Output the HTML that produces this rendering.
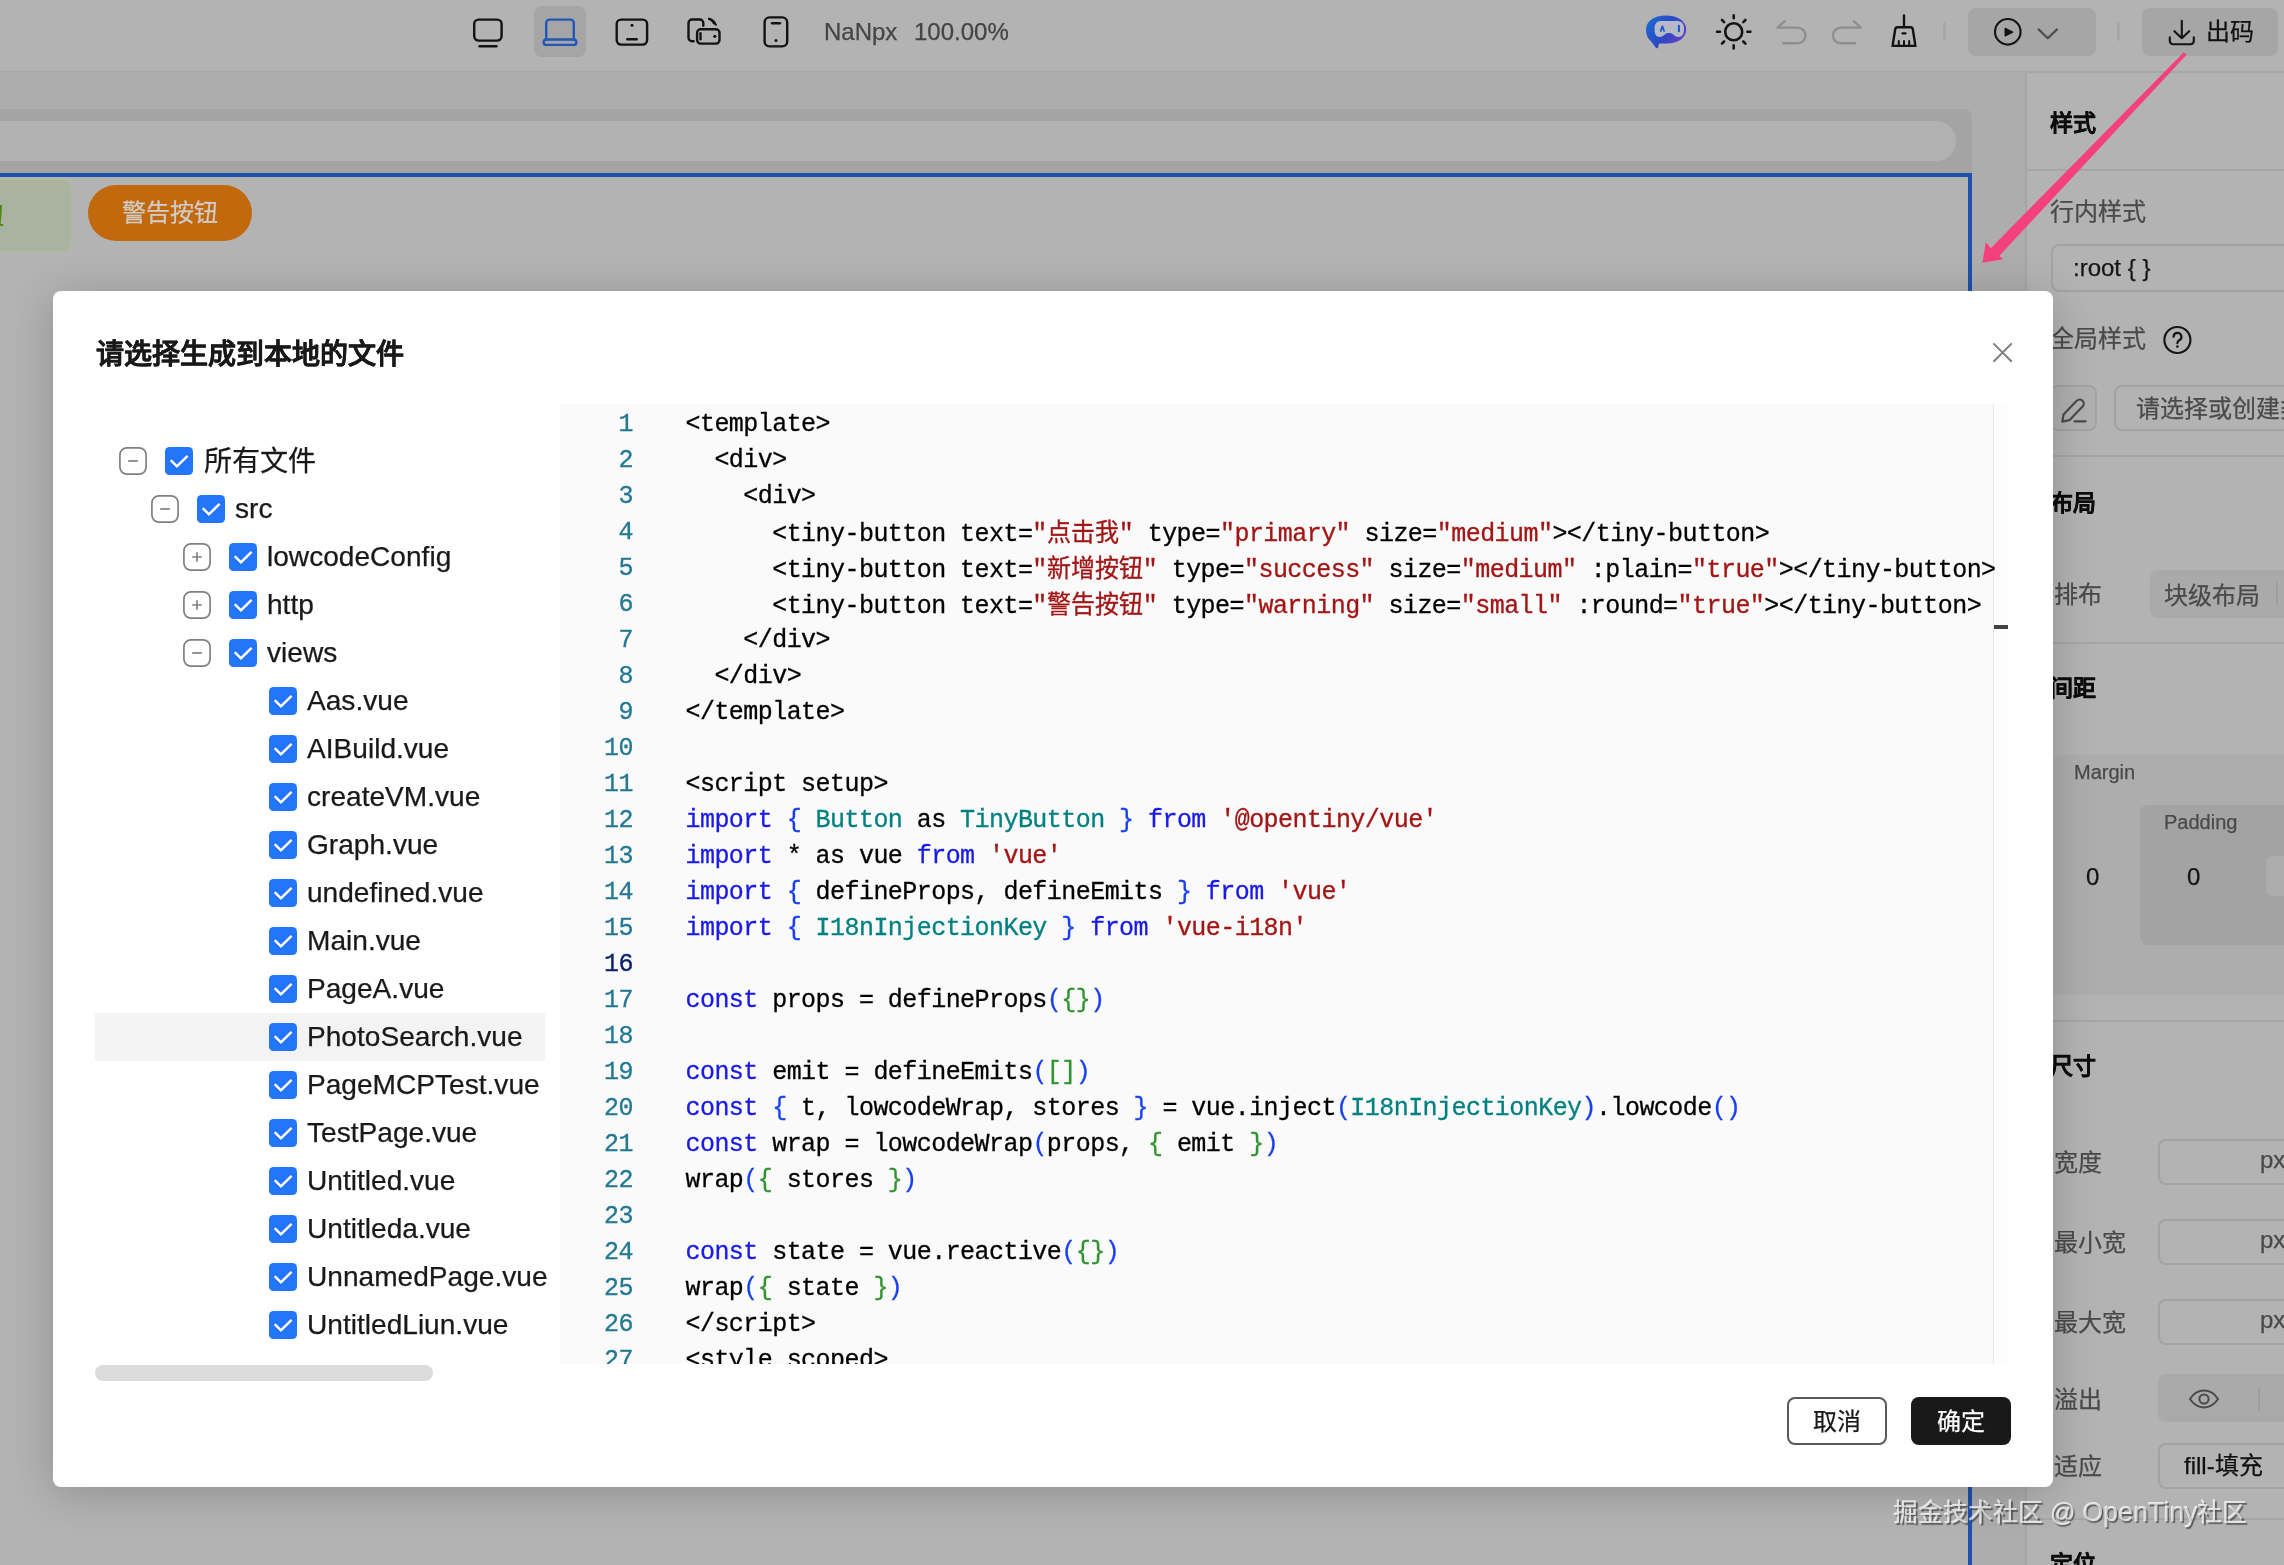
<!DOCTYPE html>
<html lang="zh-CN">
<head>
<meta charset="utf-8">
<title>出码 - 请选择生成到本地的文件</title>
<style>
*{box-sizing:border-box;margin:0;padding:0}
html,body{width:2284px;height:1565px;overflow:hidden}
body{position:relative;background:#adadad;font-family:"Liberation Sans",sans-serif;color:#111;font-size:24px;line-height:1}
#root{position:absolute;left:0;top:0;width:2284px;height:1565px;will-change:transform;-webkit-text-stroke:0.250px}
.abs{position:absolute}
svg{position:absolute;overflow:visible}
/* ---------- underlying (dimmed) app ---------- */
#toolbar{position:absolute;left:0;top:0;width:2284px;height:73px;background:#b3b3b3;border-bottom:2px solid #a7a7a7}
#canvas{position:absolute;left:0;top:72px;width:2026px;height:1493px;background:#adadad}
#frameband{position:absolute;left:0;top:109px;width:1972px;height:66px;background:#a4a4a4;border-top-right-radius:8px}
#pill{position:absolute;left:-40px;top:121px;width:1996px;height:40px;border-radius:20px;background:#b1b1b1}
#page{position:absolute;left:-4px;top:173px;width:1976px;height:1400px;background:#b3b3b3;border:4px solid #1d51ab}
#gbtn{position:absolute;left:-60px;top:178px;width:132px;height:75px;border-radius:10px;background:#a9b3a0;border:2px solid #afb9a2;color:#4c8a12;font-size:24px;line-height:71px;white-space:nowrap;overflow:visible;direction:rtl;padding-right:66px;text-align:right}
#obtn{position:absolute;left:88px;top:185px;width:164px;height:56px;border-radius:28px;background:#c2680d;color:#d0cdc9;font-size:24px;line-height:56px;text-align:center;letter-spacing:0}
#rpanel{position:absolute;left:2025px;top:73px;width:259px;height:1492px;background:#b3b3b3;border-left:2px solid #a5a5a5}
.tbtxt{position:absolute;top:19px;font-size:24px;line-height:26px;color:#454545;white-space:nowrap}
.rp{position:absolute;white-space:nowrap;font-size:24px;line-height:28px}
.rp.b{font-weight:bold;color:#0d0d0d;font-size:23px;margin-top:1px}
.rp.g{color:#4a4a4a;margin-top:1px}
.rdiv{position:absolute;left:2027px;width:257px;height:2px;background:#a6a6a6}
.rin{position:absolute;height:46px;border:2px solid #a3a3a3;border-radius:8px;background:#b3b3b3}
.rseg{position:absolute;height:48px;border-radius:8px;background:#aaaaaa}
/* ---------- modal ---------- */
#modal{position:absolute;left:53px;top:291px;width:2000px;height:1196px;background:#fff;border-radius:8px;box-shadow:0 6px 44px rgba(0,0,0,.2)}
#title{position:absolute;left:96px;top:339px;font-size:28px;line-height:32px;font-weight:bold;color:#191919;white-space:nowrap}
#tree{position:absolute;left:95px;top:437px;width:452px;height:924px;overflow:hidden}
#tree svg{position:absolute}
.tl{position:absolute;font-size:28.100px;line-height:48px;height:48px;margin-top:0px;color:#191919;white-space:nowrap}
.hl{position:absolute;left:0;width:450px;height:48px;background:#f3f3f3}
#editor{position:absolute;left:560px;top:404px;width:1448px;height:960px;background:#fafafa;overflow:hidden;font-family:"Liberation Mono",monospace;font-size:25px;letter-spacing:-0.55px;line-height:36px}
#ruler{position:absolute;left:1433px;top:0;width:15px;height:960px;background:#fcfcfc;border-left:1px solid #e6e6e6}
#cursormark{position:absolute;left:1434px;top:221px;width:14px;height:4px;background:#424242}
.ln{position:absolute;left:0;width:73px;height:36px;text-align:right;color:#237893;white-space:pre;-webkit-text-stroke:0.300px;margin-top:3px;transform:scaleY(1.035);transform-origin:0 24px}
.ln.cur{color:#0b216f}
.cl{position:absolute;left:125.500px;height:36px;color:#000;white-space:pre;-webkit-text-stroke:0.300px;margin-top:3px;transform:scaleY(1.035);transform-origin:0 24px}
.k{color:#1a1ae6}.s{color:#a31515}.t{color:#008080}.b1{color:#1840f0}.b2{color:#319331}
.cj{display:inline-block;white-space:nowrap;font-size:24px;letter-spacing:0;font-family:"Liberation Sans",sans-serif}
.btn{position:absolute;top:1397px;width:100px;height:48px;border-radius:8px;font-size:24px;line-height:46px;text-align:center;white-space:nowrap}
#wm{position:absolute;left:1893px;top:1494px;font-size:24.600px;line-height:36px;color:rgba(255,255,255,.66);text-shadow:1.500px 1.500px 1px rgba(0,0,0,.5);white-space:nowrap}
</style>
</head>
<body>
<div id="root">
<!--APP-->
<div id="toolbar"></div>
<div id="canvas"></div>
<div id="frameband"></div>
<div id="pill"></div>
<div id="page"></div>
<div id="gbtn">新增按钮</div>
<div id="obtn">警告按钮</div>
<div id="rpanel"></div>

<!-- toolbar: device icons -->
<div class="abs" style="left:534px;top:6px;width:52px;height:51px;border-radius:8px;background:#a5a5a5"></div>
<svg style="left:0;top:0" width="2284" height="72" viewBox="0 0 2284 72" fill="none" stroke="#131313" stroke-width="2.4" stroke-linecap="round" stroke-linejoin="round">
  <!-- monitor -->
  <rect x="474.2" y="19.6" width="27.4" height="21" rx="4.5"/>
  <path d="M479.5 46.2H496.5"/>
  <!-- laptop (active) -->
  <g stroke="#1f58b8">
    <path d="M546.2 39.5V23a3.4 3.4 0 0 1 3.4-3.4h20.8a3.4 3.4 0 0 1 3.4 3.4v16.5"/>
    <rect x="543.7" y="39.5" width="32.6" height="5.4" rx="2.7"/>
  </g>
  <!-- tablet -->
  <rect x="616.7" y="19.6" width="30.4" height="25" rx="4.5"/>
  <circle cx="632" cy="25.2" r="1.5" fill="#131313" stroke="none"/>
  <path d="M627.3 39.3H636.7"/>
  <!-- rotate -->
  <path d="M693.6 41.2H692a3.5 3.5 0 0 1-3.5-3.5V23a3.5 3.5 0 0 1 3.5-3.5h7.8a3.5 3.5 0 0 1 3.5 3.5V25.8"/>
  <rect x="697.1" y="29.2" width="22.4" height="14.4" rx="3.6"/>
  <path d="M700.5 33.2V39.2"/>
  <circle cx="714.8" cy="36.3" r="1.6" fill="#131313" stroke="none"/>
  <path d="M708.8 18.2c3.6 0.9 6.2 3.2 7.6 6.9l-2.9-1.6c-1-2.2-2.6-3.6-5-4.4z" fill="#131313" stroke-width="1.2"/>
  <!-- phone -->
  <rect x="764.6" y="17.4" width="22.6" height="29" rx="5"/>
  <path d="M772 23.2H780"/>
  <circle cx="776" cy="40.6" r="1.5" fill="#131313" stroke="none"/>
</svg>
<div class="tbtxt" style="left:824px">NaNpx</div>
<div class="tbtxt" style="left:914px">100.00%</div>
<!-- toolbar: right icons -->
<svg style="left:0;top:0" width="2284" height="72" viewBox="0 0 2284 72" fill="none" stroke-linecap="round" stroke-linejoin="round">
  <defs>
    <linearGradient id="rb" x1="0" y1="0.2" x2="1" y2="0.7">
      <stop offset="0" stop-color="#1c68d2"/><stop offset="0.5" stop-color="#2b49c6"/><stop offset="1" stop-color="#6a3fc0"/>
    </linearGradient>
  </defs>
  <!-- robot chat -->
  <path d="M1666 15.6c11.6 0 20.200 5.600 20.200 13.800 0 8.400-8.200 14-19.400 14h-7.800l-.8 3.800c-.3 1.300-1.500 1.500-2.300.5l-4.700-6.200c-3.400-2.700-5.200-6.800-5.200-11.600 0-8.600 7.800-14.300 20-14.300z" fill="url(#rb)"/>
  <path d="M1660.600 21h17c3.800 0 6.400 2.800 6.400 6.800v2.800c0 3.800-2.400 6.400-5.600 6.400-2.400 0-3.400-1.400-5.200-2.600-1.400-.9-2.600-1.300-4.200-1.300s-2.800.4-4.200 1.300c-1.800 1.200-2.800 2.600-5.200 2.600-3 0-5-2.600-5-6.400v-2.800c0-4 2.400-6.800 6-6.800z" fill="#b6b9c8"/>
  <path d="M1660.700 31l1.700-4.800 1.700 4.800" stroke="#2050cf" stroke-width="1.7"/>
  <path d="M1678.900 25.800v5.400" stroke="#2050cf" stroke-width="2"/>
  <!-- sun -->
  <g stroke="#131313" stroke-width="2.6">
    <circle cx="1733.7" cy="31.8" r="8.5"/>
    <path d="M1733.7 15.200v3M1733.7 45.400v3M1717 31.800h3M1747.400 31.800h3M1722 20l2.100 2.100M1743.300 41.500l2.100 2.100M1722 43.600l2.100-2.100M1743.300 22.100l2.100-2.100"/>
  </g>
  <!-- undo / redo -->
  <g stroke="#8f8f8f" stroke-width="2.4" stroke-linecap="butt">
    <path d="M1785.200 20.600l-7.600 7h20a7.850 7.850 0 0 1 0 15.700h-15.200"/>
    <path d="M1853.200 20.600l7.600 7h-20a7.850 7.850 0 0 0 0 15.700h15.200"/>
  </g>
  <!-- broom -->
  <g stroke="#131313" stroke-width="2.4">
    <path d="M1904 15.400V26.600"/>
    <path d="M1897.600 27.200h12.800a2.400 2.400 0 0 1 2.400 2.100l2.600 16.600h-22.800l2.600-16.600a2.400 2.400 0 0 1 2.400-2.100z"/>
    <path d="M1902.400 33.300h3.200" stroke-width="2.2"/>
    <path d="M1898.800 45.600v-4.600M1904 45.600v-4.600M1909.200 45.600v-4.600" stroke-width="2"/>
  </g>
  <path d="M1944.400 23v17M2118.400 23v17" stroke="#a3a3a3" stroke-width="2"/>
</svg>
<div class="abs" style="left:1968px;top:8px;width:128px;height:48px;border-radius:8px;background:#a6a6a6"></div>
<div class="abs" style="left:2142px;top:8px;width:136px;height:48px;border-radius:8px;background:#a6a6a6"></div>
<svg style="left:0;top:0" width="2284" height="72" viewBox="0 0 2284 72" fill="none" stroke="#131313" stroke-width="2.400" stroke-linecap="round" stroke-linejoin="round">
  <circle cx="2007.800" cy="31.800" r="12.800" stroke-width="2.100"/>
  <path d="M2005.200 28.400l7.400 3.700-7.400 3.700z" fill="#131313" stroke-width="1.400"/>
  <path d="M2038.600 29.400l9.200 8.800 9.200-8.800" stroke="#4d4d4d" stroke-width="2.200"/>
  <!-- download -->
  <path d="M2181.800 20.800v17M2174.400 31.200l7.400 7 7.400-7" stroke-width="2.100"/>
  <path d="M2169.800 37.400v3.600a3.200 3.200 0 0 0 3.200 3.200h17.600a3.200 3.200 0 0 0 3.200-3.200v-3.600" stroke-width="2.100"/>
</svg>
<div class="abs" style="left:2206px;top:17px;font-size:24px;line-height:30px;color:#111;white-space:nowrap">出码</div>
<!-- right panel content -->
<div class="rp b" style="left:2050px;top:108px">样式</div>
<div class="rdiv" style="top:169px"></div>
<div class="rp g" style="left:2050px;top:197px">行内样式</div>
<div class="rin" style="left:2051px;top:244px;width:260px;height:48px"></div>
<div class="rp" style="left:2073px;top:254px;color:#161616">:root { }</div>
<div class="rp g" style="left:2050px;top:324px">全局样式</div>
<svg style="left:2160px;top:322px" width="36" height="36" viewBox="0 0 36 36" fill="none" stroke="#161616" stroke-width="2.2" stroke-linecap="round" stroke-linejoin="round">
  <circle cx="17.4" cy="18" r="13"/>
  <path d="M13.6 14.800a3.900 3.900 0 1 1 5.600 3.500c-1.200.7-1.800 1.400-1.800 2.900"/>
  <circle cx="17.400" cy="24.600" r="1.300" fill="#161616" stroke="none"/>
</svg>
<div class="rin" style="left:2050px;top:385px;width:47px;height:46px;background:#b0b0b0"></div>
<svg style="left:2058px;top:392px" width="34" height="34" viewBox="0 0 34 34" fill="none" stroke="#4a4a4a" stroke-width="2.2" stroke-linecap="round" stroke-linejoin="round">
  <path d="M5.500 22.500l13.200-13.700a4.100 4.100 0 0 1 5.900 5.700L11.400 28.200l-7 1.500z"/>
  <path d="M16.500 29.400h11"/>
</svg>
<div class="rin" style="left:2114px;top:385px;width:200px;height:46px"></div>
<div class="rp g" style="left:2136px;top:394px">请选择或创建类名</div>
<div class="rdiv" style="top:455px"></div>
<div class="rp b" style="left:2050px;top:488px">布局</div>
<div class="rp g" style="left:2054px;top:580px">排布</div>
<div class="rseg" style="left:2150px;top:570px;width:160px"></div>
<div class="rp g" style="left:2164px;top:581px">块级布局</div>
<div class="abs" style="left:2276px;top:582px;width:2px;height:24px;background:#9f9f9f"></div>
<div class="rdiv" style="top:642px"></div>
<div class="rp b" style="left:2050px;top:673px">间距</div>
<div class="abs" style="left:2053px;top:755px;width:240px;height:240px;background:#adadad;border-top-left-radius:8px"></div>
<div class="rp g" style="left:2074px;top:757px;font-size:20px">Margin</div>
<div class="abs" style="left:2140px;top:805px;width:160px;height:140px;background:#a3a3a3;border-top-left-radius:8px;border-bottom-left-radius:8px"></div>
<div class="rp g" style="left:2164px;top:807px;font-size:20px">Padding</div>
<div class="rp" style="left:2086px;top:863px;color:#161616">0</div>
<div class="rp" style="left:2187px;top:863px;color:#161616">0</div>
<div class="abs" style="left:2266px;top:856px;width:40px;height:40px;background:#adadad;border-top-left-radius:6px;border-bottom-left-radius:6px"></div>
<div class="rdiv" style="top:1020px"></div>
<div class="rp b" style="left:2050px;top:1051px">尺寸</div>
<div class="rp g" style="left:2054px;top:1148px">宽度</div>
<div class="rin" style="left:2158px;top:1139px;width:160px"></div>
<div class="rp g" style="left:2260px;top:1145px">px</div>
<div class="rp g" style="left:2054px;top:1228px">最小宽</div>
<div class="rin" style="left:2158px;top:1219px;width:160px"></div>
<div class="rp g" style="left:2260px;top:1225px">px</div>
<div class="rp g" style="left:2054px;top:1308px">最大宽</div>
<div class="rin" style="left:2158px;top:1299px;width:160px"></div>
<div class="rp g" style="left:2260px;top:1305px">px</div>
<div class="rp g" style="left:2054px;top:1385px">溢出</div>
<div class="rseg" style="left:2158px;top:1374px;width:160px"></div>
<svg style="left:2186px;top:1384px" width="36" height="30" viewBox="0 0 36 30" fill="none" stroke="#4a4a4a" stroke-width="2" stroke-linecap="round" stroke-linejoin="round">
  <path d="M4 15c3.600-5.600 8.400-8.400 14-8.400s10.400 2.800 14 8.400c-3.600 5.600-8.400 8.400-14 8.400s-10.400-2.800-14-8.400z"/>
  <circle cx="18" cy="15" r="4.600"/>
</svg>
<div class="abs" style="left:2258px;top:1387px;width:2px;height:24px;background:#9f9f9f"></div>
<div class="rp g" style="left:2054px;top:1452px">适应</div>
<div class="rin" style="left:2158px;top:1443px;width:160px"></div>
<div class="rp" style="left:2184px;top:1452px;color:#111">fill-填充</div>
<div class="rdiv" style="top:1518px"></div>
<div class="rp b" style="left:2050px;top:1549px">定位</div>
<!-- pink arrow annotation -->
<svg style="left:0;top:0" width="2284" height="400" viewBox="0 0 2284 400">
  <path d="M2183.800 52.200L2186.600 54.800L1999.200 256L2003.200 259.200L1982.400 262.800L1985.800 242.200L1990.800 248.200Z" fill="#f4407c"/>
</svg>
<!--/APP-->
<!--MODAL-->
<div id="modal"></div>
<div id="title">请选择生成到本地的文件</div>
<svg style="left:1990px;top:340px" width="26" height="26" viewBox="0 0 26 26" fill="none" stroke="#7f7f7f" stroke-width="2" stroke-linecap="butt"><path d="M3.4 3.400L21.8 21.800M21.800 3.400L3.400 21.800"/></svg>
<div id="tree">
<svg class="ex" style="left:24px;top:10px" width="28" height="28" viewBox="0 0 28 28" fill="none" stroke="#808080" stroke-width="1.700"><rect x="0.900" y="0.900" width="26.200" height="26.200" rx="7"/><path d="M9.200 14H18.800"/></svg>
<svg class="cb" style="left:70px;top:10px" width="28" height="28" viewBox="0 0 28 28"><rect width="28" height="28" rx="4.500" fill="#2376f9"/><path d="M5.700 13.100L11.900 19.300L22.600 8.900" fill="none" stroke="#fff" stroke-width="2.500" stroke-linecap="butt" stroke-linejoin="miter"/></svg>
<div class="tl" style="left:109px;top:1px">所有文件</div>
<svg class="ex" style="left:56px;top:58px" width="28" height="28" viewBox="0 0 28 28" fill="none" stroke="#808080" stroke-width="1.700"><rect x="0.900" y="0.900" width="26.200" height="26.200" rx="7"/><path d="M9.200 14H18.800"/></svg>
<svg class="cb" style="left:102px;top:58px" width="28" height="28" viewBox="0 0 28 28"><rect width="28" height="28" rx="4.500" fill="#2376f9"/><path d="M5.700 13.100L11.900 19.300L22.600 8.900" fill="none" stroke="#fff" stroke-width="2.500" stroke-linecap="butt" stroke-linejoin="miter"/></svg>
<div class="tl" style="left:140px;top:48px">src</div>
<svg class="ex" style="left:88px;top:106px" width="28" height="28" viewBox="0 0 28 28" fill="none" stroke="#808080" stroke-width="1.700"><rect x="0.900" y="0.900" width="26.200" height="26.200" rx="7"/><path d="M9.200 14H18.800M14 9.200V18.800"/></svg>
<svg class="cb" style="left:134px;top:106px" width="28" height="28" viewBox="0 0 28 28"><rect width="28" height="28" rx="4.500" fill="#2376f9"/><path d="M5.700 13.100L11.900 19.300L22.600 8.900" fill="none" stroke="#fff" stroke-width="2.500" stroke-linecap="butt" stroke-linejoin="miter"/></svg>
<div class="tl" style="left:172px;top:96px">lowcodeConfig</div>
<svg class="ex" style="left:88px;top:154px" width="28" height="28" viewBox="0 0 28 28" fill="none" stroke="#808080" stroke-width="1.700"><rect x="0.900" y="0.900" width="26.200" height="26.200" rx="7"/><path d="M9.200 14H18.800M14 9.200V18.800"/></svg>
<svg class="cb" style="left:134px;top:154px" width="28" height="28" viewBox="0 0 28 28"><rect width="28" height="28" rx="4.500" fill="#2376f9"/><path d="M5.700 13.100L11.900 19.300L22.600 8.900" fill="none" stroke="#fff" stroke-width="2.500" stroke-linecap="butt" stroke-linejoin="miter"/></svg>
<div class="tl" style="left:172px;top:144px">http</div>
<svg class="ex" style="left:88px;top:202px" width="28" height="28" viewBox="0 0 28 28" fill="none" stroke="#808080" stroke-width="1.700"><rect x="0.900" y="0.900" width="26.200" height="26.200" rx="7"/><path d="M9.200 14H18.800"/></svg>
<svg class="cb" style="left:134px;top:202px" width="28" height="28" viewBox="0 0 28 28"><rect width="28" height="28" rx="4.500" fill="#2376f9"/><path d="M5.700 13.100L11.900 19.300L22.600 8.900" fill="none" stroke="#fff" stroke-width="2.500" stroke-linecap="butt" stroke-linejoin="miter"/></svg>
<div class="tl" style="left:172px;top:192px">views</div>
<svg class="cb" style="left:174px;top:250px" width="28" height="28" viewBox="0 0 28 28"><rect width="28" height="28" rx="4.500" fill="#2376f9"/><path d="M5.700 13.100L11.900 19.300L22.600 8.900" fill="none" stroke="#fff" stroke-width="2.500" stroke-linecap="butt" stroke-linejoin="miter"/></svg>
<div class="tl" style="left:212px;top:240px">Aas.vue</div>
<svg class="cb" style="left:174px;top:298px" width="28" height="28" viewBox="0 0 28 28"><rect width="28" height="28" rx="4.500" fill="#2376f9"/><path d="M5.700 13.100L11.900 19.300L22.600 8.900" fill="none" stroke="#fff" stroke-width="2.500" stroke-linecap="butt" stroke-linejoin="miter"/></svg>
<div class="tl" style="left:212px;top:288px">AIBuild.vue</div>
<svg class="cb" style="left:174px;top:346px" width="28" height="28" viewBox="0 0 28 28"><rect width="28" height="28" rx="4.500" fill="#2376f9"/><path d="M5.700 13.100L11.900 19.300L22.600 8.900" fill="none" stroke="#fff" stroke-width="2.500" stroke-linecap="butt" stroke-linejoin="miter"/></svg>
<div class="tl" style="left:212px;top:336px">createVM.vue</div>
<svg class="cb" style="left:174px;top:394px" width="28" height="28" viewBox="0 0 28 28"><rect width="28" height="28" rx="4.500" fill="#2376f9"/><path d="M5.700 13.100L11.900 19.300L22.600 8.900" fill="none" stroke="#fff" stroke-width="2.500" stroke-linecap="butt" stroke-linejoin="miter"/></svg>
<div class="tl" style="left:212px;top:384px">Graph.vue</div>
<svg class="cb" style="left:174px;top:442px" width="28" height="28" viewBox="0 0 28 28"><rect width="28" height="28" rx="4.500" fill="#2376f9"/><path d="M5.700 13.100L11.900 19.300L22.600 8.900" fill="none" stroke="#fff" stroke-width="2.500" stroke-linecap="butt" stroke-linejoin="miter"/></svg>
<div class="tl" style="left:212px;top:432px">undefined.vue</div>
<svg class="cb" style="left:174px;top:490px" width="28" height="28" viewBox="0 0 28 28"><rect width="28" height="28" rx="4.500" fill="#2376f9"/><path d="M5.700 13.100L11.900 19.300L22.600 8.900" fill="none" stroke="#fff" stroke-width="2.500" stroke-linecap="butt" stroke-linejoin="miter"/></svg>
<div class="tl" style="left:212px;top:480px">Main.vue</div>
<svg class="cb" style="left:174px;top:538px" width="28" height="28" viewBox="0 0 28 28"><rect width="28" height="28" rx="4.500" fill="#2376f9"/><path d="M5.700 13.100L11.900 19.300L22.600 8.900" fill="none" stroke="#fff" stroke-width="2.500" stroke-linecap="butt" stroke-linejoin="miter"/></svg>
<div class="tl" style="left:212px;top:528px">PageA.vue</div>
<div class="hl" style="top:576px"></div>
<svg class="cb" style="left:174px;top:586px" width="28" height="28" viewBox="0 0 28 28"><rect width="28" height="28" rx="4.500" fill="#2376f9"/><path d="M5.700 13.100L11.900 19.300L22.600 8.900" fill="none" stroke="#fff" stroke-width="2.500" stroke-linecap="butt" stroke-linejoin="miter"/></svg>
<div class="tl" style="left:212px;top:576px">PhotoSearch.vue</div>
<svg class="cb" style="left:174px;top:634px" width="28" height="28" viewBox="0 0 28 28"><rect width="28" height="28" rx="4.500" fill="#2376f9"/><path d="M5.700 13.100L11.900 19.300L22.600 8.900" fill="none" stroke="#fff" stroke-width="2.500" stroke-linecap="butt" stroke-linejoin="miter"/></svg>
<div class="tl" style="left:212px;top:624px">PageMCPTest.vue</div>
<svg class="cb" style="left:174px;top:682px" width="28" height="28" viewBox="0 0 28 28"><rect width="28" height="28" rx="4.500" fill="#2376f9"/><path d="M5.700 13.100L11.900 19.300L22.600 8.900" fill="none" stroke="#fff" stroke-width="2.500" stroke-linecap="butt" stroke-linejoin="miter"/></svg>
<div class="tl" style="left:212px;top:672px">TestPage.vue</div>
<svg class="cb" style="left:174px;top:730px" width="28" height="28" viewBox="0 0 28 28"><rect width="28" height="28" rx="4.500" fill="#2376f9"/><path d="M5.700 13.100L11.900 19.300L22.600 8.900" fill="none" stroke="#fff" stroke-width="2.500" stroke-linecap="butt" stroke-linejoin="miter"/></svg>
<div class="tl" style="left:212px;top:720px">Untitled.vue</div>
<svg class="cb" style="left:174px;top:778px" width="28" height="28" viewBox="0 0 28 28"><rect width="28" height="28" rx="4.500" fill="#2376f9"/><path d="M5.700 13.100L11.900 19.300L22.600 8.900" fill="none" stroke="#fff" stroke-width="2.500" stroke-linecap="butt" stroke-linejoin="miter"/></svg>
<div class="tl" style="left:212px;top:768px">Untitleda.vue</div>
<svg class="cb" style="left:174px;top:826px" width="28" height="28" viewBox="0 0 28 28"><rect width="28" height="28" rx="4.500" fill="#2376f9"/><path d="M5.700 13.100L11.900 19.300L22.600 8.900" fill="none" stroke="#fff" stroke-width="2.500" stroke-linecap="butt" stroke-linejoin="miter"/></svg>
<div class="tl" style="left:212px;top:816px">UnnamedPage.vue</div>
<svg class="cb" style="left:174px;top:874px" width="28" height="28" viewBox="0 0 28 28"><rect width="28" height="28" rx="4.500" fill="#2376f9"/><path d="M5.700 13.100L11.900 19.300L22.600 8.900" fill="none" stroke="#fff" stroke-width="2.500" stroke-linecap="butt" stroke-linejoin="miter"/></svg>
<div class="tl" style="left:212px;top:864px">UntitledLiun.vue</div>
</div>
<div class="abs" style="left:95px;top:1365px;width:338px;height:16px;border-radius:8px;background:#dbdbdb"></div>
<div id="editor">
<div id="ruler"></div><div id="cursormark"></div>
<div class="ln" style="top:0px">1</div><div class="cl" style="top:0px">&lt;template&gt;</div>
<div class="ln" style="top:36px">2</div><div class="cl" style="top:36px">  &lt;div&gt;</div>
<div class="ln" style="top:72px">3</div><div class="cl" style="top:72px">    &lt;div&gt;</div>
<div class="ln" style="top:108px">4</div><div class="cl" style="top:108px">      &lt;tiny-button text=<span class="s">"<span class="cj" style="width:72px">点击我</span>"</span> type=<span class="s">"primary"</span> size=<span class="s">"medium"</span>&gt;&lt;/tiny-button&gt;</div>
<div class="ln" style="top:144px">5</div><div class="cl" style="top:144px">      &lt;tiny-button text=<span class="s">"<span class="cj" style="width:96px">新增按钮</span>"</span> type=<span class="s">"success"</span> size=<span class="s">"medium"</span> :plain=<span class="s">"true"</span>&gt;&lt;/tiny-button&gt;</div>
<div class="ln" style="top:180px">6</div><div class="cl" style="top:180px">      &lt;tiny-button text=<span class="s">"<span class="cj" style="width:96px">警告按钮</span>"</span> type=<span class="s">"warning"</span> size=<span class="s">"small"</span> :round=<span class="s">"true"</span>&gt;&lt;/tiny-button&gt;</div>
<div class="ln" style="top:216px">7</div><div class="cl" style="top:216px">    &lt;/div&gt;</div>
<div class="ln" style="top:252px">8</div><div class="cl" style="top:252px">  &lt;/div&gt;</div>
<div class="ln" style="top:288px">9</div><div class="cl" style="top:288px">&lt;/template&gt;</div>
<div class="ln" style="top:324px">10</div><div class="cl" style="top:324px"></div>
<div class="ln" style="top:360px">11</div><div class="cl" style="top:360px">&lt;script setup&gt;</div>
<div class="ln" style="top:396px">12</div><div class="cl" style="top:396px"><span class="k">import</span> <span class="b1">{</span> <span class="t">Button</span> as <span class="t">TinyButton</span> <span class="b1">}</span> <span class="k">from</span> <span class="s">'@opentiny/vue'</span></div>
<div class="ln" style="top:432px">13</div><div class="cl" style="top:432px"><span class="k">import</span> * as vue <span class="k">from</span> <span class="s">'vue'</span></div>
<div class="ln" style="top:468px">14</div><div class="cl" style="top:468px"><span class="k">import</span> <span class="b1">{</span> defineProps, defineEmits <span class="b1">}</span> <span class="k">from</span> <span class="s">'vue'</span></div>
<div class="ln" style="top:504px">15</div><div class="cl" style="top:504px"><span class="k">import</span> <span class="b1">{</span> <span class="t">I18nInjectionKey</span> <span class="b1">}</span> <span class="k">from</span> <span class="s">'vue-i18n'</span></div>
<div class="ln cur" style="top:540px">16</div><div class="cl" style="top:540px"></div>
<div class="ln" style="top:576px">17</div><div class="cl" style="top:576px"><span class="k">const</span> props = defineProps<span class="b1">(</span><span class="b2">{}</span><span class="b1">)</span></div>
<div class="ln" style="top:612px">18</div><div class="cl" style="top:612px"></div>
<div class="ln" style="top:648px">19</div><div class="cl" style="top:648px"><span class="k">const</span> emit = defineEmits<span class="b1">(</span><span class="b2">[]</span><span class="b1">)</span></div>
<div class="ln" style="top:684px">20</div><div class="cl" style="top:684px"><span class="k">const</span> <span class="b1">{</span> t, lowcodeWrap, stores <span class="b1">}</span> = vue.inject<span class="b1">(</span><span class="t">I18nInjectionKey</span><span class="b1">)</span>.lowcode<span class="b1">()</span></div>
<div class="ln" style="top:720px">21</div><div class="cl" style="top:720px"><span class="k">const</span> wrap = lowcodeWrap<span class="b1">(</span>props, <span class="b2">{</span> emit <span class="b2">}</span><span class="b1">)</span></div>
<div class="ln" style="top:756px">22</div><div class="cl" style="top:756px">wrap<span class="b1">(</span><span class="b2">{</span> stores <span class="b2">}</span><span class="b1">)</span></div>
<div class="ln" style="top:792px">23</div><div class="cl" style="top:792px"></div>
<div class="ln" style="top:828px">24</div><div class="cl" style="top:828px"><span class="k">const</span> state = vue.reactive<span class="b1">(</span><span class="b2">{}</span><span class="b1">)</span></div>
<div class="ln" style="top:864px">25</div><div class="cl" style="top:864px">wrap<span class="b1">(</span><span class="b2">{</span> state <span class="b2">}</span><span class="b1">)</span></div>
<div class="ln" style="top:900px">26</div><div class="cl" style="top:900px">&lt;/script&gt;</div>
<div class="ln" style="top:936px">27</div><div class="cl" style="top:936px">&lt;style scoped&gt;</div>
</div>
<div class="btn" style="left:1787px;border:2px solid #595959;color:#191919;background:#fff">取消</div>
<div class="btn" style="left:1911px;background:#191919;color:#fff;line-height:50px">确定</div>
<div id="wm">掘金技术社区<span style="font-size:25px"> @ </span><span style="font-size:26.800px">OpenTiny</span>社区</div>
<!--/MODAL-->
</div>
</body>
</html>
